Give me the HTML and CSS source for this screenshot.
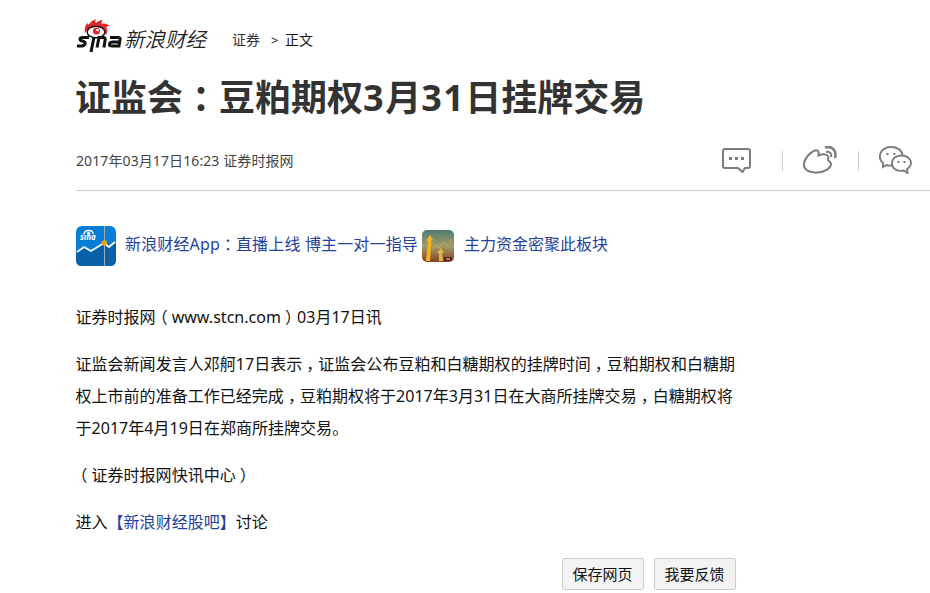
FILE: index.html
```html
<!DOCTYPE html>
<html lang="zh-CN">
<head>
    <meta charset="UTF-8">
    <title>证监会：豆粕期权3月31日挂牌交易</title>
    <link rel="stylesheet" href="styles.css">
</head>
<body>
    <header class="top-bar">
        <svg class="logo" width="134" height="36" viewBox="0 0 134 36">
            <path d="M9 15C8 9 10 6 12 5C12 7 13 7 14 5C15 3 18 2 20 1C19 3 19 4 20 5C22 3 24 2 27 2C25 4 25 5 26 6C29 5 31 6 34 8C30 8 30 9 31 11C32 13 31 15 30 17C28 10 13 8 9 15Z" fill="#e3262b"/>
            <ellipse cx="20" cy="14" rx="8.800" ry="5.800" fill="#fff" stroke="#111" stroke-width="1.400"/>
            <circle cx="20.500" cy="13" r="3.500" fill="#e3262b"/>
            <circle cx="21.500" cy="12" r="1.300" fill="#fff"/>
            <g fill="none" stroke="#111" stroke-width="3">
                <path d="M13 19.500H7Q4 19.500 4 21Q4 22.800 7 23.300Q10 24 9 26Q8 28 5 28H1"/>
                <path d="M18 19L15 34"/>
                <path d="M21 29.500L23 19.500H27Q30 19.500 29 22.500L28 29.500"/>
                <path d="M34 19.500H42Q45 19.500 44 22L43 28H36Q33 28 33.500 26Q34 24 37 24H43"/>
            </g>
            <text class="logo-text" x="48" y="28.500">新浪财经</text>
        </svg>
        <nav class="crumbs"><a>证券</a><span class="arrow">&gt;</span><span>正文</span></nav>
    </header>

    <main>
        <h1>证监会<span class="mark">：</span>豆粕期权<span class="num">3</span>月<span class="num">31</span>日挂牌交易</h1>
        <div class="info">
            <div class="date">2017年03月17日16:23 证券时报网</div>
            <div class="share">
                <svg width="30" height="28" viewBox="0 0 30 28" fill="none" stroke="#7c7c7c" stroke-width="2">
                    <path d="M3 3H26Q28 3 28 5V20Q28 22 26 22H23L20.500 26L16 22H3Q1 22 1 20V5Q1 3 3 3Z"/>
                    <path d="M7 12.500H10M13 12.500H16M19 12.500H22" stroke-width="3"/>
                </svg>
                <i class="line"></i>
                <svg width="34" height="28" viewBox="0 0 34 28" fill="none" stroke="#7c7c7c" stroke-width="2">
                    <path d="M15 5C12 2 2 10 1 18C0 24 7 27 14 26.500C22 26 28 22 28 18C28 15 24 15 25 13C27 9 22 7 15.500 9.500C16 7 16 6 15 5Z"/>
                    <path d="M22 1.500C29 -1 34 5 32 12" stroke-width="2.500"/>
                    <path d="M23 6C27 5 29 8 28 11"/>
                </svg>
                <i class="line"></i>
                <svg width="34" height="28" viewBox="0 0 34 28" fill="none" stroke="#7c7c7c" stroke-width="1.900">
                    <path d="M13 19.500Q10 20 7.500 19L4 21V17C-2 12 1 1 12 1C18 1 23 4 23.500 9"/>
                    <path d="M22.500 9.500C16 9.500 13 13 13 17.500C13 23 19 26 25 24.500L28.500 27L28 23C31 21 32 19 32 17C32 13 28 9.500 22.500 9.500Z"/>
                    <path d="M7.500 8H9.500M14.500 8H16.500M18.500 16H20.500M24.500 16H26.500" stroke-width="2"/>
                </svg>
            </div>
        </div>

        <div class="promo">
            <svg class="app" width="40" height="40" viewBox="0 0 40 40">
                <rect width="40" height="40" rx="6" fill="#087dd5"/>
                <path d="M0 25L8 21L15 25L28 17L33 21L40 16V34Q40 40 34 40H6Q0 40 0 34Z" fill="#0862aa"/>
                <path d="M28.500 0V40" stroke="#9fabb0" stroke-width="1"/>
                <path d="M1 26L8 21L15 25L28 17L33 21L39 16" fill="none" stroke="#fff" stroke-width="1.800"/>
                <circle cx="28.300" cy="17" r="2.800" fill="#f7a00b"/>
                <path d="M8 8.500Q8 5 12 4.500Q17 4 17 8" fill="none" stroke="#fff" stroke-width="1.500"/>
                <circle cx="12.500" cy="7.500" r="1.700" fill="#fff"/>
                <text class="app-text" x="4" y="14">sına</text>
            </svg>
            <a class="first">新浪财经App<span class="mark">：</span>直播上线 博主一对一指导</a>
            <svg class="gold" width="32" height="32" viewBox="0 0 32 32">
                <defs>
                    <linearGradient id="sky" x2="0" y2="1">
                        <stop offset="0" stop-color="#507b70"/>
                        <stop offset=".5" stop-color="#a19b69"/>
                        <stop offset="1" stop-color="#854521"/>
                    </linearGradient>
                </defs>
                <rect width="32" height="32" rx="5" fill="url(#sky)"/>
                <path d="M4 31L6 11H4L8 5L11 10H9.500L8 31Z" fill="#f3b51b"/>
                <path d="M17 31V23H15L19 18L22 23H20L21 31Z" fill="#e6b44a"/>
                <path d="M10 20L14 15L17 18L22 12L25 15L30 9" fill="none" stroke="#c9a866"/>
                <path d="M22 27H30V31H22Z" fill="#64211a"/>
                <path d="M24 29H28" stroke="#f4d9af"/>
            </svg>
            <a class="second">主力资金密聚此板块</a>
        </div>

        <article>
            <p>证券时报网<span class="mark">（</span>www.stcn.com<span class="mark">）</span>03月17日讯</p>
            <p>证监会新闻发言人邓舸17日表示<span class="mark">，</span>证监会公布豆粕和白糖期权的挂牌时间<span class="mark">，</span>豆粕期权和白糖期<br>权上市前的准备工作已经完成<span class="mark">，</span>豆粕期权将于2017年3月31日在大商所挂牌交易<span class="mark">，</span>白糖期权将<br>于2017年4月19日在郑商所挂牌交易。</p>
            <p><span class="mark">（</span>证券时报网快讯中心<span class="mark">）</span></p>
            <p>进入<a>【新浪财经股吧】</a>讨论</p>
        </article>
        <div class="actions">
            <button>保存网页</button>
            <button>我要反馈</button>
        </div>
    </main>
</body>
</html>
```
FILE: styles.css
```css
body {
    margin: 0;
    padding-left: 76px;
    height: 593px;
    box-sizing: border-box;
    overflow: hidden;
    background: #fff;
    color: #111;
    font-family: "Noto Sans", "Noto Sans CJK SC", sans-serif;
    font-size: 16px;
    white-space: nowrap;
    text-spacing-trim: space-all;
}

svg {
    display: block;
    flex: none;
}

.top-bar {
    display: flex;
    padding-top: 18px;
    height: 53px;
}

.logo-text {
    font-size: 20.5px;
    font-style: italic;
    font-weight: 350;
    fill: #222;
}

.crumbs {
    display: flex;
    margin-left: 22px;
    padding-top: 12px;
    font-size: 14px;
    line-height: 20px;
}

.crumbs a {
    color: #333;
}

.arrow {
    width: 14px;
    padding-left: 11px;
    font-size: 13px;
}

h1 {
    margin: 0 0 0 -1px;
    font-size: 36px;
    line-height: 54px;
    color: #333;
}

.num {
    letter-spacing: 1.5px;
}

/* half-width punctuation centred in a full cell */
.mark {
    display: inline-block;
    width: 1em;
    line-height: 1;
    text-align: center;
    font-feature-settings: "halt";
}

.info {
    display: flex;
    justify-content: space-between;
    height: 65px;
    border-bottom: 1px solid #ccc;
}

.date {
    padding-top: 26px;
    font-size: 14px;
    line-height: 20px;
    letter-spacing: 0.1px;
    color: #444;
}

.share {
    display: flex;
    padding: 21px 17px 0 0;
}

.line {
    width: 1px;
    height: 20px;
    margin: 5px 20px 0 30px;
    background: #ccc;
}

.line + svg + .line {
    margin-left: 21px;
}

.promo {
    display: flex;
    align-items: center;
    height: 40px;
    margin-top: 35px;
}

.promo a,
article a {
    color: #23429b;
}

.first {
    width: 293px;
    margin: -6px 4px 0 9px;
    letter-spacing: 0.15px;
}

.second {
    margin: -6px 0 0 10px;
}

.app-text {
    font-size: 8px;
    font-style: italic;
    font-weight: bold;
    fill: #fff;
}

article {
    margin: 35px 0 0 -0.5px;
    line-height: 32px;
    letter-spacing: 0.03px;
}

article p {
    margin: 0 0 15px;
}

.actions {
    display: flex;
    gap: 10px;
    width: 660px;
    justify-content: flex-end;
    margin-top: 20px;
}

button {
    width: 82px;
    height: 32px;
    padding: 0 1px 2px 0;
    border: 1px solid #ccc;
    border-radius: 2px;
    background: #f3f3f3;
    font-family: "Noto Sans CJK SC", sans-serif;
    font-size: 15px;
    color: #111;
}
```
